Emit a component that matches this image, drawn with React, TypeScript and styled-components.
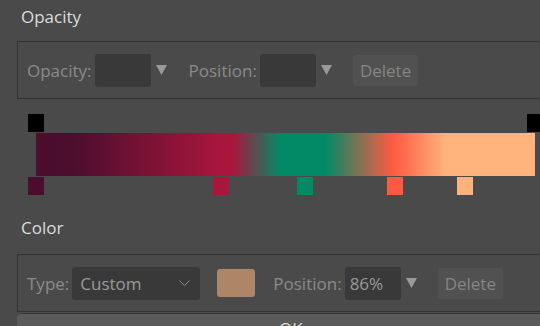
import styled, { createGlobalStyle } from 'styled-components';

const GlobalStyle = createGlobalStyle`
    html, body {
        margin: 0;
        padding: 0;
        background: #4a4a4a;
        font-family: "Open Sans", "Noto Sans", sans-serif;
    }
`;

const Page = styled.div`
    width: 540px;
    height: 326px;
    overflow: hidden;
    padding-left: 17px;
    box-sizing: border-box;
`;

const Heading = styled.div<{ $h: number; $top: number }>`
    color: #dcdcdc;
    font-size: 17px;
    line-height: 23px;
    padding-left: 4px;
    height: ${({ $h }) => $h}px;
    padding-top: ${({ $top }) => $top}px;
    box-sizing: border-box;
`;

const Panel = styled.div<{ $h: number }>`
    width: 560px;
    border: 1px solid #333;
    box-sizing: border-box;
    display: flex;
    align-items: center;
    padding: 0 9px;
    height: ${({ $h }) => $h}px;
`;

const Label = styled.span<{ $gap?: number }>`
    color: #8a8a8a;
    font-size: 17px;
    margin-right: 3px;
    margin-left: ${({ $gap = 0 }) => $gap}px;
`;

const Field = styled.div`
    width: 56px;
    height: 33px;
    background: #393939;
    border-radius: 3px;
    color: #999;
    font-size: 17px;
    line-height: 33px;
    padding-left: 5px;
    box-sizing: border-box;
`;

const ArrowBox = styled.svg`
    margin-left: 5px;
    flex: none;
`;

const Arrow = () => (
    <ArrowBox width="11" height="10" viewBox="0 0 11 10">
        <polygon points="0,0 11,0 5.5,10" fill="#9a9a9a" />
    </ArrowBox>
);

const Button = styled.div<{ $gap: number }>`
    height: 31px;
    padding: 0 7px;
    margin-left: ${({ $gap }) => $gap}px;
    background: #515151;
    border-radius: 3px;
    color: #858585;
    font-size: 17px;
    line-height: 31px;
`;

const Select = styled.div`
    width: 128px;
    height: 33px;
    background: #393939;
    border-radius: 3px;
    color: #999;
    font-size: 17px;
    line-height: 33px;
    padding: 0 10px 0 8px;
    box-sizing: border-box;
    display: flex;
    justify-content: space-between;
    align-items: center;
`;

const Swatch = styled.div`
    width: 38px;
    height: 28px;
    border-radius: 3px;
    background: #ad8567;
    margin-left: 17px;
`;

const Editor = styled.div`
    position: relative;
    margin-top: 15px;
    margin-left: 11px;
    height: 82px;
    width: 520px;
`;

const Bar = styled.div`
    position: absolute;
    left: 8px;
    top: 19px;
    width: 499px;
    height: 43px;
    background: linear-gradient(
        to right,
        #4a0d2d 0%,
        #4d0e2e 8%,
        #a9163c 37%,
        #a9163c 39.4%,
        #028a66 49%,
        #028a66 58%,
        #ff5a41 71.5%,
        #ffb27b 82%,
        #ffb27b 100%
    );
`;

const Stop = styled.div<{ $bottom?: boolean }>`
    position: absolute;
    width: 16px;
    height: 18px;
    top: ${({ $bottom }) => ($bottom ? 63 : 0)}px;
`;

const OkButton = styled.div`
    margin-top: 1px;
    width: 560px;
    height: 30px;
    background: #5b5b5b;
    border-top: 1px solid #3a3a3a;
    border-radius: 4px 0 0 0;
    color: #dcdcdc;
    font-size: 17px;
    line-height: 23px;
    padding-left: 262px;
    padding-top: 3px;
    box-sizing: border-box;
`;

const colorStops = [
    { pos: 0, color: '#4a0d2d' },
    { pos: 0.37, color: '#a9163c' },
    { pos: 0.54, color: '#028a66' },
    { pos: 0.72, color: '#ff5a41' },
    { pos: 0.86, color: '#ffb27b' },
];

const App = () => {
    return (
        <Page>
            <GlobalStyle />
            <Heading $h={41} $top={5}>Opacity</Heading>
            <Panel $h={58}>
                <Label>Opacity:</Label>
                <Field />
                <Arrow />
                <Label $gap={22}>Position:</Label>
                <Field />
                <Arrow />
                <Button $gap={21}>Delete</Button>
            </Panel>
            <Editor>
                <Stop style={{ left: 0, background: '#000' }} />
                <Stop style={{ left: 499, background: '#000' }} />
                <Bar />
                {colorStops.map((s) => (
                    <Stop
                        key={s.pos}
                        $bottom
                        style={{ left: Math.round(s.pos * 499), background: s.color }}
                    />
                ))}
            </Editor>
            <Heading $h={58} $top={20}>Color</Heading>
            <Panel $h={58}>
                <Label>Type:</Label>
                <Select>
                    <span>Custom</span>
                    <svg width="11" height="7" viewBox="0 0 11 7">
                        <polyline points="0.5,0.5 5.5,5.5 10.5,0.5" fill="none" stroke="#8a8a8a" strokeWidth="1" />
                    </svg>
                </Select>
                <Swatch />
                <Label $gap={18}>Position:</Label>
                <Field>86%</Field>
                <Arrow />
                <Button $gap={21}>Delete</Button>
            </Panel>
            <OkButton>OK</OkButton>
        </Page>
    );
};

export default App;
